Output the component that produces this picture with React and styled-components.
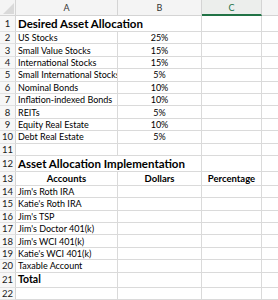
import React from "react";
import styled, { createGlobalStyle } from "styled-components";

const GlobalStyle = createGlobalStyle`
  html, body {
    margin: 0;
    padding: 0;
    background: #ffffff;
    overflow: hidden;
  }
  body {
    font-family: Lato, "Liberation Sans", sans-serif;
    color: #000;
  }
`;

const NORMAL = 12.4;

const rows = [
  { h: 16, a: "Desired Asset Allocation", title: true, spill: true },
  { a: "US Stocks", b: "25%" },
  { a: "Small Value Stocks", b: "15%" },
  { a: "International Stocks", b: "15%" },
  { a: "Small International Stocks", b: "5%" },
  { a: "Nominal Bonds", b: "10%" },
  { a: "Inflation-indexed Bonds", b: "10%" },
  { a: "REITs", b: "5%" },
  { a: "Equity Real Estate", b: "10%" },
  { a: "Debt Real Estate", b: "5%" },
  {},
  { h: 16, a: "Asset Allocation Implementation", title: true, spill: true },
  { h: 14, a: "Accounts", b: "Dollars", c: "Percentage", head: true },
  { a: "Jim's Roth IRA" },
  { a: "Katie's Roth IRA" },
  { a: "Jim's TSP" },
  { a: "Jim's Doctor 401(k)" },
  { a: "Jim's WCI 401(k)" },
  { a: "Katie's WCI 401(k)" },
  { a: "Taxable Account" },
  { h: 15, a: "Total", total: true },
  {},
];

export default function App() {
  return (
    <>
      <GlobalStyle />
      <Sheet>
        <HeaderRow>
          <Corner>
            <svg width="15" height="15" viewBox="0 0 15 15">
              <polygon points="14,3 14,14 3,14" fill="#d9d9d9" />
            </svg>
          </Corner>
          <ColHead $w={102}>A</ColHead>
          <ColHead $w={84}>B</ColHead>
          <ColHead $w={60} $active>
            C
          </ColHead>
          <ColHead $last />
        </HeaderRow>

        {rows.map((r, i) => (
          <Row key={i} $h={r.h || NORMAL}>
            <RowNum>{i + 1}</RowNum>
            <Cell $w={102} $spill={r.spill} $head={r.head}>
              <CellText $title={r.title} $head={r.head} $total={r.total}>
                {r.a}
              </CellText>
            </Cell>
            <Cell $w={84} $center>
              <CellText $head={r.head}>{r.b}</CellText>
            </Cell>
            <Cell $w={60} $center>
              <CellText $head={r.head}>{r.c}</CellText>
            </Cell>
            <Cell $fill />
          </Row>
        ))}
      </Sheet>
    </>
  );
}

const Sheet = styled.div`
  display: flex;
  flex-direction: column;
  width: 278px;
  height: 300px;
  overflow: hidden;
`;

const HeaderRow = styled.div`
  display: flex;
  height: 16px;
  flex-shrink: 0;
`;

const Corner = styled.div`
  width: 16px;
  flex-shrink: 0;
  box-sizing: border-box;
  background: #f4f4f4;
  border-right: 1px solid #d4d4d4;
  border-bottom: 1px solid #d4d4d4;
  display: flex;
  align-items: flex-end;
  justify-content: flex-end;

  svg {
    display: block;
  }
`;

const ColHead = styled.div`
  ${(p) => (p.$w ? `width: ${p.$w}px; flex-shrink: 0;` : "flex: 1;")}
  box-sizing: border-box;
  background: ${(p) => (p.$active ? "#eceeec" : "#f4f4f4")};
  border-right: ${(p) => (p.$last ? "none" : "1px solid #d4d4d4")};
  border-bottom: ${(p) =>
    p.$active ? "2px solid #217346" : "1px solid #d4d4d4"};
  color: ${(p) => (p.$active ? "#217346" : "#333")};
  font-family: Lato, "Liberation Sans", sans-serif;
  font-size: 9px;
  display: flex;
  align-items: center;
  justify-content: center;
  padding-top: ${(p) => (p.$active ? "1px" : "0")};
`;

const Row = styled.div`
  display: flex;
  height: ${(p) => p.$h}px;
  flex-shrink: 0;
`;

const RowNum = styled.div`
  width: 16px;
  flex-shrink: 0;
  box-sizing: border-box;
  background: #f7f7f7;
  border-right: 1px solid #d4d4d4;
  border-bottom: 1px solid #e2e2e2;
  font-family: Lato, "Liberation Sans", sans-serif;
  font-size: 9.5px;
  color: #1a1a1a;
  display: flex;
  align-items: center;
  justify-content: center;
`;

const Cell = styled.div`
  ${(p) => (p.$w ? `width: ${p.$w}px; flex-shrink: 0;` : "flex: 1;")}
  box-sizing: border-box;
  min-width: 0;
  border-right: ${(p) => (p.$spill || p.$fill ? "none" : "1px solid #dadada")};
  border-bottom: 1px solid #dadada;
  display: flex;
  align-items: center;
  justify-content: ${(p) => (p.$center || p.$head ? "center" : "flex-start")};
  padding: 0 2px;
  white-space: nowrap;
  overflow: ${(p) => (p.$spill ? "visible" : "hidden")};
  position: relative;
  z-index: ${(p) => (p.$spill ? 1 : 0)};
`;

const CellText = styled.span`
  font-family: Lato, "Liberation Sans", sans-serif;
  font-size: ${(p) =>
    p.$title ? "11.5px" : p.$total ? "10.5px" : p.$head ? "9.5px" : "9px"};
  font-weight: ${(p) => (p.$title || p.$head || p.$total ? 700 : 400)};
  line-height: 1;
  color: #000;
`;
